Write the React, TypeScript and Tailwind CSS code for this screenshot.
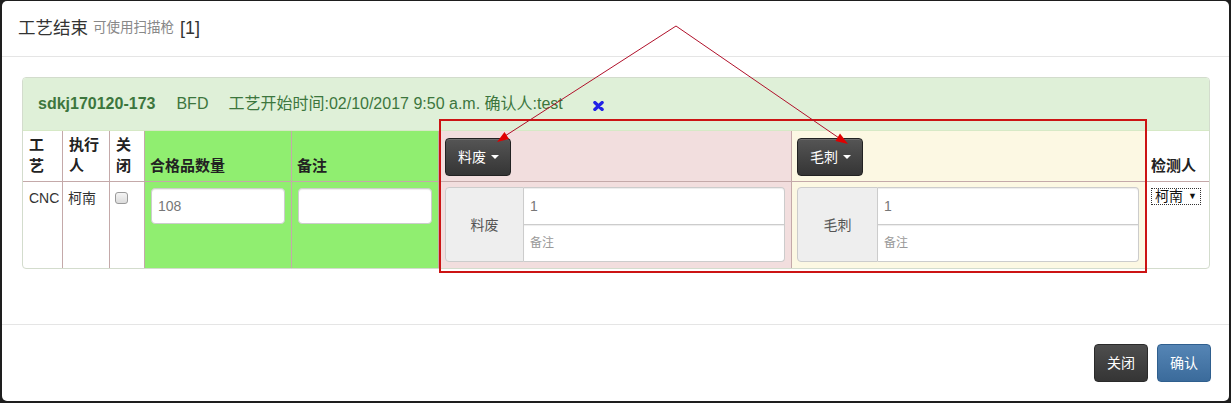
import React from "react";

const font = { fontFamily: '"Liberation Sans", "Noto Sans CJK SC", sans-serif' };

function Caret() {
  return <span className="inline-block w-0 h-0 border-l-[4px] border-r-[4px] border-t-[4px] border-l-transparent border-r-transparent border-t-white ml-[5px]" />;
}

function DropBtn({ label }: { label: string }) {
  return (
    <div className="h-[38px] w-[66px] rounded-[4px] border border-[#222] bg-gradient-to-b from-[#555555] to-[#353535] text-white text-[14px] flex items-center pl-[12px] shadow-[inset_0_1px_0_rgba(255,255,255,0.15)]">
      <span>{label}</span>
      <Caret />
    </div>
  );
}

function InputGroup({ label, addonW }: { label: string; addonW: string }) {
  return (
    <div className="flex h-[75px] w-full">
      <div className={`${addonW} shrink-0 bg-[#eeeeee] border border-[#cccccc] rounded-l-[4px] flex items-center justify-center text-[14px] text-[#555]`}>
        {label}
      </div>
      <div className="flex-1 flex flex-col">
        <div className="h-[38px] bg-white border border-l-0 border-[#cccccc] rounded-tr-[4px] flex items-center pl-[6px] text-[14px] text-[#777] shadow-[inset_0_1px_1px_rgba(0,0,0,0.075)]">1</div>
        <div className="h-[37px] bg-white border border-l-0 border-t-0 border-[#cccccc] rounded-br-[4px] flex items-center pl-[6px] text-[12px] text-[#999] shadow-[inset_0_1px_1px_rgba(0,0,0,0.075)]">备注</div>
      </div>
    </div>
  );
}

export default function App() {
  const cols = "grid grid-cols-[40px_47px_35px_147px_147px_353px_354px_63px]";
  const bl = "border-r border-[#c4a9a9]";
  return (
    <div className="w-[1231px] h-[403px] bg-[#1e1e1e] relative overflow-hidden pt-[1px] pl-[2px]" style={font}>
      <div className="w-[1227px] h-[400px] bg-white rounded-[5px] flex flex-col text-[#333]">
        {/* header */}
        <div className="h-[56px] border-b border-[#e5e5e5] flex items-center pl-[16px] pb-[1px]">
          <span className="text-[17.5px]">工艺结束</span>
          <span className="text-[13.5px] text-[#888] ml-[5px]">可使用扫描枪</span>
          <span className="text-[18px] ml-[6px]">[1]</span>
        </div>
        {/* body */}
        <div className="h-[267px] pt-[20px] pl-[20px]">
          <div className="w-[1188px] border border-[#d3dccd] rounded-[4px] overflow-hidden">
            <div className="h-[53px] bg-[#dff0d8] border-b border-[#d6e9c6] flex items-center pl-[15px] text-[16px] text-[#3c763d]">
              <span className="font-bold">sdkj170120-173</span>
              <span className="ml-[21px]">BFD</span>
              <span className="ml-[20px]">工艺开始时间:02/10/2017 9:50 a.m. 确认人:test</span>
              <svg className="ml-[30px] mt-[3px]" width="11" height="10" viewBox="0 0 11 10">
                <path d="M1.8 1.5 L9.2 8.5 M9.2 1.5 L1.8 8.5" stroke="#2222e6" strokeWidth="3.2" strokeLinecap="round" />
              </svg>
            </div>
            {/* header row */}
            <div className={`${cols} h-[51px] border-b border-[#c4a9a9] text-[15px] leading-[21px] font-bold text-[#222]`}>
              <div className={`${bl} flex items-end px-[6px] pb-[5px]`}>工艺</div>
              <div className={`${bl} flex items-end px-[6px] pb-[5px]`}>执行人</div>
              <div className={`${bl} flex items-end px-[6px] pb-[5px]`}>关闭</div>
              <div className={`${bl} bg-[#90ee70] flex items-end px-[5px] pb-[5px]`}>合格品数量</div>
              <div className={`${bl} bg-[#90ee70] flex items-end px-[5px] pb-[5px]`}>备注</div>
              <div className={`${bl} bg-[#f2dede] flex items-end px-[6px] pb-[5px] font-normal`}>
                <DropBtn label="料废" />
              </div>
              <div className={`${bl} bg-[#fcf8e3] flex items-end px-[5px] pb-[5px] font-normal`}>
                <DropBtn label="毛刺" />
              </div>
              <div className="flex items-end px-[5px] pb-[5px]">检测人</div>
            </div>
            {/* body row */}
            <div className={`${cols} h-[86px] text-[14px] leading-[20px]`}>
              <div className={`${bl} px-[6px] pt-[6px]`}>CNC</div>
              <div className={`${bl} px-[5px] pt-[6px]`}>柯南</div>
              <div className={`${bl} pl-[5px] pt-[10px]`}>
                <div className="w-[13px] h-[12px] rounded-[3px] border border-[#9a9a9a] bg-gradient-to-b from-[#f4f4f4] to-[#dcdcdc]" />
              </div>
              <div className={`${bl} bg-[#90ee70] px-[6px] pt-[6px]`}>
                <div className="h-[36px] bg-white border border-[#cccccc] rounded-[4px] flex items-center pl-[6px] text-[#777] shadow-[inset_0_1px_1px_rgba(0,0,0,0.075)]">108</div>
              </div>
              <div className={`${bl} bg-[#90ee70] px-[6px] pt-[6px]`}>
                <div className="h-[36px] bg-white border border-[#cccccc] rounded-[4px] shadow-[inset_0_1px_1px_rgba(0,0,0,0.075)]" />
              </div>
              <div className={`${bl} bg-[#f2dede] px-[6px] pt-[5px]`}>
                <InputGroup label="料废" addonW="w-[79px]" />
              </div>
              <div className={`${bl} bg-[#fcf8e3] pl-[5px] pr-[6px] pt-[5px]`}>
                <InputGroup label="毛刺" addonW="w-[81px]" />
              </div>
              <div className="pl-[5px] pt-[6px]">
                <div className="w-[50px] h-[17px] border border-dotted border-[#333] bg-white flex items-center pl-[3px] text-[14px] leading-[15px] text-[#111]">
                  <span>柯南</span>
                  <span className="text-[9px] ml-[5px]">▼</span>
                </div>
              </div>
            </div>
          </div>
        </div>
        {/* footer */}
        <div className="flex-1 border-t border-[#e5e5e5] flex justify-end pt-[19px] pr-[18px] gap-[9px]">
          <div className="w-[54px] h-[38px] rounded-[4px] border border-[#2a2a2a] bg-gradient-to-b from-[#4e4e4e] to-[#353535] text-white text-[14px] flex items-center justify-center">关闭</div>
          <div className="w-[54px] h-[38px] rounded-[4px] border border-[#2f5f8e] bg-gradient-to-b from-[#5585b5] to-[#3b6b9b] text-white text-[14px] flex items-center justify-center">确认</div>
        </div>
      </div>

      {/* annotation overlay */}
      <div className="absolute left-[439px] top-[119px] w-[708px] h-[154px] border-2 border-[#cc1414] pointer-events-none" />
      <svg className="absolute left-0 top-0 pointer-events-none" width="1231" height="403">
        <line x1="676" y1="26" x2="505" y2="136" stroke="#b0102a" strokeWidth="1" />
        <line x1="676" y1="26" x2="839" y2="138" stroke="#b0102a" strokeWidth="1" />
        <polygon points="497,142 509,139 504.5,132" fill="#e00000" />
        <polygon points="848,144 835.5,141 840,133.5" fill="#e00000" />
      </svg>
    </div>
  );
}
